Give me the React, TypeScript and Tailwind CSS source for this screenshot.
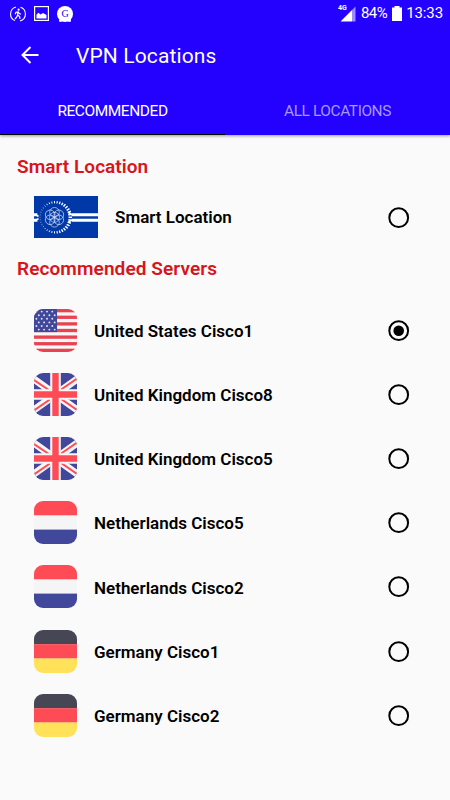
import { useState } from "react";
import type { ReactNode } from "react";
import clsx from "clsx";

type Country = "us" | "uk" | "nl" | "de";

type Server = {
  id: string;
  name: string;
  country: Country;
};

const servers: Server[] = [
  { id: "us1", name: "United States Cisco1", country: "us" },
  { id: "uk8", name: "United Kingdom Cisco8", country: "uk" },
  { id: "uk5", name: "United Kingdom Cisco5", country: "uk" },
  { id: "nl5", name: "Netherlands Cisco5", country: "nl" },
  { id: "nl2", name: "Netherlands Cisco2", country: "nl" },
  { id: "de1", name: "Germany Cisco1", country: "de" },
  { id: "de2", name: "Germany Cisco2", country: "de" },
];

const flags: Record<Country, ReactNode> = {
  us: (
    <>
      <rect width="43" height="43" fill="#f8f8f8" />
      {[0, 1, 2, 3, 4, 5, 6].map((i) => (
        <rect key={i} y={i * 6.615} width="43" height="3.31" fill="#e8434f" />
      ))}
      <rect width="23" height="23.1" fill="#41479b" />
      {[0, 1, 2, 3, 4, 5].map((r) =>
        [0, 1, 2, 3].map((c) => (
          <circle
            key={`${r}-${c}`}
            cx={(r % 2 ? 4.8 : 2.4) + c * 5.3}
            cy={2.6 + r * 3.6}
            r="0.95"
            fill="#e4e6f5"
          />
        ))
      )}
    </>
  ),
  uk: (
    <>
      <rect width="43" height="43" fill="#41479b" />
      <path d="M-3 4 46 39M46 4-3 39" stroke="#f5f5f5" strokeWidth="7" />
      <path d="M0 7 17 18.5M0 37.5 18 25M43 5.5 25 18M43 37 25 24.5" stroke="#ff4b55" strokeWidth="2" />
      <path d="M21.5 0V43M0 21.5H43" stroke="#f5f5f5" strokeWidth="10.6" />
      <path d="M21.5 0V43M0 21.5H43" stroke="#ff4b55" strokeWidth="6.4" />
    </>
  ),
  nl: (
    <>
      <rect width="43" height="43" fill="#f5f5f5" />
      <rect width="43" height="14.3" fill="#ff4b55" />
      <rect y="28.6" width="43" height="14.4" fill="#41479b" />
    </>
  ),
  de: (
    <>
      <rect width="43" height="14.3" fill="#464655" />
      <rect y="14.2" width="43" height="14.4" fill="#ff4b55" />
      <rect y="28.5" width="43" height="14.5" fill="#ffe15a" />
    </>
  ),
};

function Flag({ country }: { country: Country }) {
  return (
    <svg viewBox="0 0 43 43" className="size-[43px] shrink-0 rounded-[9px]">
      {flags[country]}
    </svg>
  );
}

function SmartFlag() {
  const rays = Array.from({ length: 36 }, (_, i) => i * 10);
  return (
    <svg viewBox="0 0 64 42" className="h-[42px] w-16 shrink-0">
      <rect width="64" height="42" fill="#0038a8" />
      <path d="M38 18.7H64M38 24.3H64M0 18.7H4M0 24.3H4" stroke="#fff" strokeWidth="3" />
      <circle cx="20.5" cy="21.3" r="17.5" fill="#0038a8" />
      {rays.map((a) => {
        // rays get longer towards the right hand side
        const side = (Math.cos((a * Math.PI) / 180) + 1) / 2;
        return (
          <path
            key={a}
            d={`M34.5 21.3h${0.9 + side * 2.6}`}
            stroke="#fff"
            strokeWidth={0.5 + side * 1.1}
            transform={`rotate(${a} 20.5 21.3)`}
          />
        );
      })}
      <path
        d="M34.5 16.5 38.5 19.2H42M34.5 26 38.5 23.8H42M0 18.7H2L4.5 20.5M0 24.3H2L4.5 22.500"
        stroke="#fff"
        strokeWidth="1.6"
        fill="none"
      />
      <g fill="none" stroke="#cfdcf8" strokeWidth="0.7">
        <circle cx="20.5" cy="21.3" r="5" />
        {[0, 60, 120, 180, 240, 300].map((a) => (
          <circle key={a} cx="20.5" cy="16.3" r="4.8" transform={`rotate(${a} 20.5 21.3)`} />
        ))}
      </g>
    </svg>
  );
}

function Radio({ checked }: { checked: boolean }) {
  return (
    <svg viewBox="0 0 22 22" className="mt-px size-[22px] shrink-0">
      <circle cx="10.7" cy="10.7" r="9.4" fill="none" stroke="#000" strokeWidth="2" />
      {checked && <circle cx="10.7" cy="10.7" r="5.3" />}
    </svg>
  );
}

function StatusBar() {
  return (
    <div className="flex h-[27px] items-center justify-between pr-[7px] pl-[10px]">
      <div className="flex items-center gap-2">
        <svg viewBox="0 0 16 16" className="size-4" fill="none" stroke="#fff">
          <path d="M6 1A7.2 7.2 0 0 0 5 14.6M10 15A7.2 7.2 0 0 0 10.5 1.2" strokeWidth="1.1" />
          <circle cx="8.6" cy="3.7" r="1.1" fill="#fff" stroke="none" />
          <path d="M8 5.5 7.6 9 9.6 10.5 10 13M7.6 9 6.8 11 5 13M5.2 8.2 6 6.2 8.2 5.8 9.3 7.6 11 8.2" strokeWidth="1.2" />
        </svg>
        <svg viewBox="0 0 15 15" className="size-[15px]">
          <rect x="0.6" y="0.6" width="13.8" height="13.8" fill="none" stroke="#fff" strokeWidth="1.2" />
          <path d="M2.5 12.5V8.5L4.5 6.8 6.5 8.5 9 7 12.5 9V12.5Z" fill="#fff" />
        </svg>
        <span className="relative flex size-4 items-center justify-center rounded-full bg-white">
          <span className="absolute bottom-0 left-0.5 size-[3px] rounded-full bg-white" />
          <span className="absolute right-0.5 bottom-0 size-[3px] rounded-full bg-white" />
          <span className="font-['Liberation_Serif',serif] text-[10px] leading-none text-[#2300ff]">G</span>
        </span>
      </div>
      <div className="flex items-center text-[15px] leading-none text-white">
        <div className="relative mr-[5px] h-4 w-[17px]">
          <span className="absolute -top-px -left-px text-[7px] leading-none font-bold">4G</span>
          <svg viewBox="0 0 17 16" className="size-full">
            <path d="M1.5 15.5 13 4V15.5Z" fill="#fff" />
            <path d="M13 4 16.5 0.5V15.5H13Z" fill="#9c8cff" />
          </svg>
        </div>
        <span className="tracking-[-0.55px]">84%</span>
        <svg viewBox="0 0 10 15" className="mr-1 ml-[5px] h-[15px] w-[10px]" fill="#fff">
          <path d="M2.5 0H7.5V1.5H10V15H0V1.5H2.5Z" />
        </svg>
        <span className="tracking-[-0.1px]">13:33</span>
      </div>
    </div>
  );
}

export default function App() {
  const [tab, setTab] = useState("recommended");
  const [selected, setSelected] = useState("us1");

  return (
    <div className="flex h-[800px] w-[450px] flex-col overflow-hidden bg-[#fafafa] font-['Roboto',sans-serif]">
      <header className="h-[135px] shrink-0 bg-[#2300ff] shadow-[0_1px_3px_rgba(0,0,0,0.4)]">
        <StatusBar />
        <div className="flex h-14 items-center pl-[21px] text-white">
          <svg viewBox="0 0 18 18" className="size-[18px]" fill="none" stroke="#fff" strokeWidth="2">
            <path d="M17.5 9H2M9.5 1 1.5 9 9.5 17" />
          </svg>
          <h1 className="mt-0.5 ml-[37px] text-[21px] leading-none tracking-[0.12px]">VPN Locations</h1>
        </div>
        <div className="flex h-[52px] text-[15.5px] tracking-[-0.45px]">
          <button
            type="button"
            onClick={() => setTab("recommended")}
            className={clsx(
              "flex-1 border-b pt-[7px]",
              tab === "recommended" ? "border-black text-white" : "border-transparent text-[#a799ff]"
            )}
          >
            RECOMMENDED
          </button>
          <button
            type="button"
            onClick={() => setTab("all")}
            className={clsx(
              "flex-1 border-b pt-[7px]",
              tab === "all" ? "border-black text-white" : "border-transparent text-[#a799ff]"
            )}
          >
            ALL LOCATIONS
          </button>
        </div>
      </header>

      <main className="flex flex-col text-black">
        <h2 className="mt-5 pl-[17px] text-[19px] leading-6 font-semibold tracking-[0.05px] text-[#d8141c]">
          Smart Location
        </h2>
        <button
          type="button"
          onClick={() => setSelected("smart")}
          className="mt-[17px] flex h-[42px] items-center pr-10 pl-[34px]"
        >
          <SmartFlag />
          <span className="ml-[17px] flex-1 pt-0.5 text-left text-[17px] font-semibold">Smart Location</span>
          <Radio checked={selected === "smart"} />
        </button>
        <h2 className="mt-[19px] pl-[17px] text-[19px] leading-6 font-semibold tracking-[0.1px] text-[#d8141c]">
          Recommended Servers
        </h2>
        <div className="mt-[17px]">
          {servers.map((s) => (
            <button
              key={s.id}
              type="button"
              onClick={() => setSelected(s.id)}
              className="flex h-[64.2px] w-full items-center pr-10 pl-[34px]"
            >
              <Flag country={s.country} />
              <span className="ml-[17px] flex-1 pt-[3px] text-left text-[17px] font-semibold">{s.name}</span>
              <Radio checked={selected === s.id} />
            </button>
          ))}
        </div>
      </main>
    </div>
  );
}
